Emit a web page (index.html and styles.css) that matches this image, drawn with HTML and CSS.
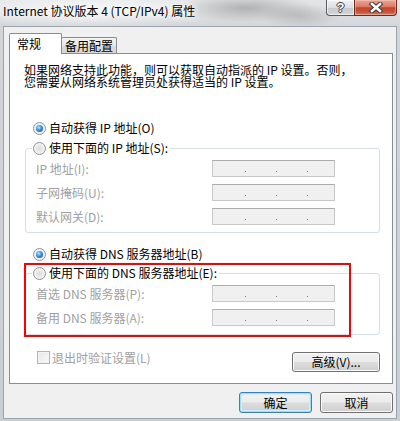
FILE: index.html
```html
<!DOCTYPE html>
<html lang="zh-CN">
<head>
<meta charset="utf-8">
<title>Internet 协议版本 4 (TCP/IPv4) 属性</title>
<link rel="stylesheet" href="styles.css">
</head>
<body>
<div class="window">
  <div class="titlebar">
    <div class="title">Internet 协议版本 4 (TCP/IPv4) 属性</div>
    <div class="caption">
      <div class="cap help">?</div>
      <div class="cap close">
        <svg width="16" height="11" viewBox="0 0 16 11">
          <path d="M4 2 L12 9 M12 2 L4 9" stroke="#3d3d3d" stroke-width="4.6" stroke-linecap="square" fill="none"/>
          <path d="M4 2 L12 9 M12 2 L4 9" stroke="#ffffff" stroke-width="2.6" stroke-linecap="square" fill="none"/>
        </svg>
      </div>
    </div>
  </div>
  <div class="client">
    <div class="tabs">
      <div class="tab active">常规</div>
      <div class="tab">备用配置</div>
    </div>
    <div class="panel">
      <p class="desc">如果网络支持此功能，则可以获取自动指派的 IP 设置。否则，<br>您需要从网络系统管理员处获得适当的 IP 设置。</p>

      <div class="opt r1"><span class="radio checked"></span><span>自动获得 IP 地址(O)</span></div>

      <fieldset class="group g1">
        <legend><span class="opt"><span class="radio"></span><span>使用下面的 IP 地址(S):</span></span></legend>
        <div class="field"><span class="label">IP 地址(I):</span><span class="ipbox"><i></i><i></i><i></i></span></div>
        <div class="field"><span class="label">子网掩码(U):</span><span class="ipbox"><i></i><i></i><i></i></span></div>
        <div class="field"><span class="label">默认网关(D):</span><span class="ipbox"><i></i><i></i><i></i></span></div>
      </fieldset>

      <div class="opt r3"><span class="radio checked"></span><span>自动获得 DNS 服务器地址(B)</span></div>

      <fieldset class="group g2">
        <legend><span class="opt"><span class="radio"></span><span>使用下面的 DNS 服务器地址(E):</span></span></legend>
        <div class="field"><span class="label">首选 DNS 服务器(P):</span><span class="ipbox"><i></i><i></i><i></i></span></div>
        <div class="field"><span class="label">备用 DNS 服务器(A):</span><span class="ipbox"><i></i><i></i><i></i></span></div>
      </fieldset>

      <div class="bottom-row">
        <span class="check"><span class="box"></span><span class="dis">退出时验证设置(L)</span></span>
        <div class="btn adv">高级(V)...</div>
      </div>

      <div class="highlight"></div>
    </div>
    <div class="footer">
      <div class="btn default">确定</div>
      <div class="btn">取消</div>
    </div>
  </div>
</div>
</body>
</html>
```

FILE: styles.css
```css
* { box-sizing: border-box; }
html, body { margin: 0; padding: 0; }
body {
  width: 400px;
  height: 421px;
  overflow: hidden;
  font-family: "Noto Sans CJK SC", "Noto Sans", sans-serif;
  font-size: 12px;
  color: #000;
  background: #cdd2d6;
}
.window {
  width: 400px;
  height: 421px;
  display: flex;
  flex-direction: column;
  background:
    radial-gradient(ellipse 70px 14px at 245px 8px, rgba(140,140,140,.55), transparent),
    radial-gradient(ellipse 40px 12px at 300px 16px, rgba(150,150,150,.45), transparent),
    radial-gradient(ellipse 150px 18px at 90px 10px, rgba(255,255,255,.8), transparent),
    linear-gradient(#e3e5e7, #d2d5d8 30px, #c9ced3);
}
.titlebar {
  height: 26px;
  display: flex;
  align-items: flex-start;
}
.title {
  padding: 3px 0 0 3px;
  line-height: 16px;
  font-size: 12px;
  text-shadow: 0 0 6px #fff, 0 0 10px #fff;
}
.caption {
  margin-left: auto;
  margin-right: 3px;
  display: flex;
}
.cap {
  height: 16px;
  display: flex;
  align-items: center;
  justify-content: center;
}
.help {
  width: 28px;
  border: 1px solid #565b62;
  border-top: none;
  border-right: none;
  border-radius: 0 0 0 4px;
  background: linear-gradient(#f0f1f3, #dcdfe2 50%, #c6cacf 52%, #d2d5d9);
  color: #fff;
  font-family: "Liberation Sans", sans-serif;
  font-weight: bold;
  font-size: 13px;
  line-height: 14px;
  text-shadow: -1px 0 #3a3a3a, 1px 0 #3a3a3a, 0 -1px #3a3a3a, 0 1px #3a3a3a;
  box-shadow: inset 0 0 0 1px rgba(255,255,255,.6);
}
.close {
  width: 43px;
  border: 1px solid #6e2a1e;
  border-top: none;
  border-radius: 0 0 4px 0;
  background: linear-gradient(#e9a797, #d87a64 45%, #c4442b 52%, #cd5237 80%, #dd7f62);
  box-shadow: inset 0 0 0 1px rgba(255,210,200,.45);
}

.client {
  margin: 0 3px;
  height: 393px;
  background: #f0f0f0;
  border: 1px solid #9ba4ad;
  padding: 6px 3px 0 5px;
  display: flex;
  flex-direction: column;
}
.tabs {
  height: 20px;
  display: flex;
  align-items: flex-end;
}
.tab {
  height: 16px;
  width: 56px;
  margin-left: -1px;
  border: 1px solid #898c95;
  border-bottom: none;
  border-radius: 2px 2px 0 0;
  background: linear-gradient(#f3f3f3, #e8e8e8 50%, #dcdcdc 51%, #d6d6d6);
  text-align: center;
  line-height: 15px;
}
.tab.active {
  margin-left: 0;
  width: 53px;
  height: 21px;
  margin-bottom: -1px;
  background: #fff;
  position: relative;
  z-index: 2;
  text-align: left;
  padding-left: 7px;
  line-height: 20px;
}
.panel {
  width: 384px;
  height: 331px;
  border: 1px solid #898c95;
  background: #fff;
  position: relative;
  display: flex;
  flex-direction: column;
}
.desc {
  margin: 10px 0 0 14px;
  line-height: 11.5px;
  white-space: nowrap;
}
.opt {
  display: flex;
  align-items: center;
  gap: 3px;
  height: 16px;
  line-height: 16px;
}
.r1 { margin: 33px 0 0 23px; }
.r3 { margin: 13px 0 0 23px; }
.radio {
  width: 13px;
  height: 13px;
  flex: none;
  border-radius: 50%;
  border: 1px solid #8c8f94;
  background: radial-gradient(circle at 50% 50%, #dcdcdc 0, #ebebeb 45%, #fafafa 80%);
  display: flex;
  align-items: center;
  justify-content: center;
}
.radio.checked::after {
  content: "";
  width: 7px;
  height: 7px;
  border-radius: 50%;
  background: radial-gradient(circle at 40% 35%, #b4e8ff 0, #3b8fd8 45%, #174c86 100%);
}
.group {
  margin: 4px 0 0 15px;
  width: 355px;
  border: 1px solid #d5dfe5;
  border-radius: 3px;
  padding: 4px 0 7px 0;
  min-inline-size: 0;
}
.g2 {
  margin-top: 3px;
  padding-bottom: 8px;
}
.group legend {
  margin-left: 6px;
  padding: 0 2px 0 1px;
  height: 16px;
  background: #fff;
}
.field {
  display: flex;
  align-items: center;
  height: 17px;
  margin-left: 10px;
}
.field + .field { margin-top: 7px; }
.label {
  width: 176px;
  color: #a0a0a0;
  line-height: 16px;
}
.ipbox {
  width: 123px;
  height: 17px;
  border: 1px solid #c8c8c8;
  border-top-color: #acacac;
  background: #f0f0f0;
  display: flex;
  align-items: flex-end;
  gap: 30px;
  padding: 0 0 4px 32px;
}
.ipbox i {
  width: 1px;
  height: 1px;
  background: #7a7a7a;
}
.bottom-row {
  margin: 16px 12px 0 27px;
  display: flex;
  align-items: flex-start;
}
.check {
  display: flex;
  align-items: center;
  gap: 2px;
  height: 13px;
}
.box {
  width: 13px;
  height: 13px;
  border: 1px solid #b3b3b3;
  background: linear-gradient(135deg, #e6e6e6, #fafafa);
  box-shadow: inset 0 0 0 1px #f4f4f4;
}
.dis {
  color: #a0a0a0;
  line-height: 13px;
}
.btn {
  height: 21px;
  width: 73px;
  border: 1px solid #707070;
  border-radius: 3px;
  background: linear-gradient(#f2f2f2, #ebebeb 49%, #dddddd 51%, #cfcfcf);
  box-shadow: inset 0 0 0 1px #fbfbfb;
  display: flex;
  align-items: center;
  justify-content: center;
  line-height: 16px;
}
.adv {
  margin-left: auto;
  margin-top: 1px;
  width: 88px;
  height: 20px;
}
.highlight {
  position: absolute;
  left: 14px;
  top: 209px;
  width: 327px;
  height: 74px;
  border: 2px solid #ff0000;
}
.footer {
  margin-top: 8px;
  display: flex;
  justify-content: flex-end;
  gap: 8px;
}
.btn.default {
  border-color: #3c7fb1;
  box-shadow: inset 0 0 0 1px #9fdcf9, inset 0 0 0 2px #d4effb;
}
```
